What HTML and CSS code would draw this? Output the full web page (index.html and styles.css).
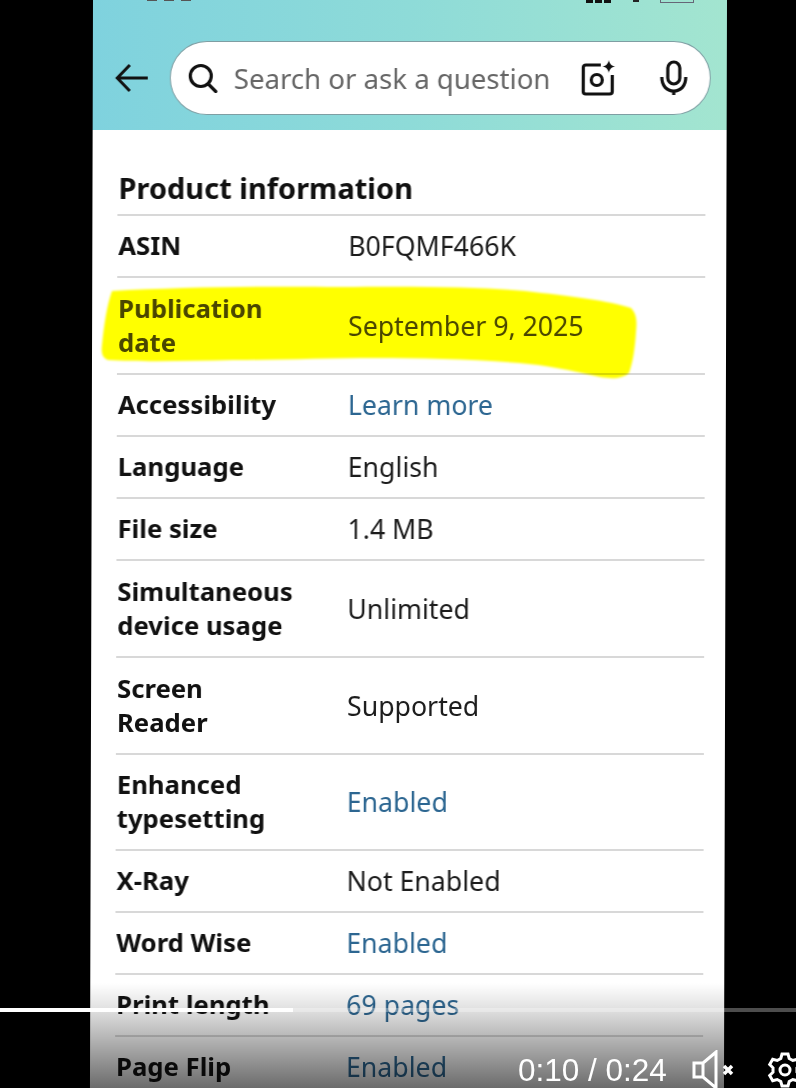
FILE: index.html
```html
<!DOCTYPE html>
<html lang="en">
<head>
  <meta charset="UTF-8">
  <meta name="viewport" content="width=device-width, initial-scale=1.0">
  <title>Product information</title>
  <link rel="stylesheet" href="styles.css">
</head>
<body>

  <div class="phone">
    <div class="top-bar">
      <div class="status-bar">
        <div class="status-time"><i></i><i></i><i></i></div>
        <div class="status-signal"><i></i><i></i><i></i></div>
        <div class="status-wifi"></div>
        <div class="status-battery"></div>
      </div>
      <div class="search-row">
        <svg class="back-icon" viewBox="0 0 34 30" width="34" height="30" fill="none" stroke="#111" stroke-width="3">
          <path d="M33 15H3M15 2 2.500 15 15 28"/>
        </svg>
        <div class="search-box">
          <svg class="search-icon" viewBox="0 0 30 30" width="30" height="30" fill="none" stroke="#111" stroke-width="3.200" stroke-linecap="round">
            <circle cx="13" cy="13" r="10.500"/>
            <path d="M20.500 21 28 28.500"/>
          </svg>
          <span class="search-text">Search or ask a question</span>
          <svg class="camera-icon" viewBox="0 0 36 36" width="36" height="36" fill="none" stroke="#111" stroke-width="3.200">
            <path d="M20 5H5a2.500 2.500 0 0 0-2.500 2.500v24A2.500 2.500 0 0 0 5 34h24a2.500 2.500 0 0 0 2.500-2.500V15"/>
            <circle cx="16" cy="20" r="5.500"/>
            <path d="M28 0c.8 4 2.500 5.700 6.500 6.500-4 .8-5.700 2.500-6.500 6.500-.8-4-2.500-5.700-6.500-6.500 4-.8 5.700-2.500 6.500-6.500Z" fill="#111" stroke="none"/>
          </svg>
          <svg class="mic-icon" viewBox="0 0 30 36" width="30" height="36" fill="none" stroke="#111" stroke-width="3.200">
            <rect x="9" y="2" width="12" height="22" rx="6"/>
            <path d="M3 17c0 9 5 14 12 14s12-5 12-14M15 31v4"/>
          </svg>
        </div>
      </div>
    </div>

    <div class="content">
      <h2>Product information</h2>

      <div class="row">
        <div class="label">ASIN</div>
        <div class="value">B0FQMF466K</div>
      </div>
      <div class="row tall marked">
        <div class="label">Publication date</div>
        <div class="value">September 9, 2025</div>
      </div>
      <div class="row">
        <div class="label">Accessibility</div>
        <div class="value link">Learn more</div>
      </div>
      <div class="row">
        <div class="label">Language</div>
        <div class="value">English</div>
      </div>
      <div class="row">
        <div class="label">File size</div>
        <div class="value">1.4 MB</div>
      </div>
      <div class="row tall">
        <div class="label">Simultaneous device usage</div>
        <div class="value">Unlimited</div>
      </div>
      <div class="row tall">
        <div class="label">Screen Reader</div>
        <div class="value">Supported</div>
      </div>
      <div class="row snug">
        <div class="label">Enhanced typesetting</div>
        <div class="value link">Enabled</div>
      </div>
      <div class="row">
        <div class="label">X-Ray</div>
        <div class="value">Not Enabled</div>
      </div>
      <div class="row">
        <div class="label">Word Wise</div>
        <div class="value link">Enabled</div>
      </div>
      <div class="row">
        <div class="label">Print length</div>
        <div class="value link">69 pages</div>
      </div>
      <div class="row">
        <div class="label">Page Flip</div>
        <div class="value link">Enabled</div>
      </div>
    </div>
  </div>

  <!-- Marker stroke drawn over the publication date row -->
  <svg class="marker" viewBox="0 0 796 1088" width="796" height="1088">
    <path d="M112 291C180 287 270 286 340 287C420 286 480 287 525 291C570 296 610 301 631 308C637 314 637 322 636 332C635 348 633 362 629 373C622 379 612 379 600 377C570 370 545 365 519 363C470 359 420 358 376 358C330 358 280 360 233 360C190 361 140 362 108 360C102 358 101 352 102 345C104 325 107 305 112 291Z"/>
  </svg>

  <!-- Video player controls -->
  <div class="player">
    <div class="progress"><div class="progress-done"></div></div>
    <div class="controls">
      <span class="time">0:10 / 0:24</span>
      <svg class="mute-icon" viewBox="0 0 42 40" width="42" height="40" fill="none" stroke="#fff" stroke-width="3">
        <path d="M2 13H11V27H2ZM11 13 24 2V38L11 27"/>
        <path d="M32 16 40 24M40 16 32 24" stroke-width="3.500"/>
      </svg>
      <svg class="gear-icon" viewBox="0 0 36 36" width="36" height="36" fill="none" stroke="#fff" stroke-width="3">
        <circle cx="18" cy="18" r="5"/>
        <path d="M15 2h6l1.200 4.500 3.600 2 4.500-1.200 3 5.200-3.300 3.300v4.400l3.300 3.300-3 5.200-4.500-1.200-3.600 2L21 34h-6l-1.200-4.500-3.600-2-4.500 1.200-3-5.200 3.300-3.300v-4.400L2.700 12.500l3-5.200 4.500 1.200 3.600-2Z"/>
      </svg>
    </div>
  </div>

</body>
</html>
```

FILE: styles.css
```css
html, body {
  height: 1088px;
}

body {
  position: relative;
  margin: 0;
  overflow: hidden;
  background-color: #000;
  font-family: 'Noto Sans', 'Open Sans', sans-serif;
  color: #111;
}

/* The filmed phone leans a little to the left */
.phone {
  width: 634px;
  margin-left: 93px;
  background-color: #fff;
  transform: skewX(-0.16deg);
  transform-origin: top left;
  filter: blur(0.3px);
}

.top-bar {
  height: 130px;
  background: linear-gradient(90deg, #7fd2de 0%, #8edbd8 50%, #a3e5d0 100%);
}

.status-bar {
  display: flex;
  align-items: flex-start;
  height: 3px;
  padding: 0 24px 0 54px;
  overflow: hidden;
}

.status-time {
  display: flex;
  gap: 7px;
  margin-right: 395px;
}

.status-time i {
  width: 10px;
  height: 1px;
  background-color: #555;
}

.status-signal {
  display: flex;
  gap: 2px;
  margin-right: 22px;
}

.status-signal i {
  width: 7px;
  height: 3px;
  background-color: #111;
}

.status-wifi {
  width: 6px;
  height: 2px;
  margin-right: 21px;
  background-color: #222;
}

.status-battery {
  width: 32px;
  height: 2px;
  border: 1px solid #667;
  border-top: none;
}

.search-row {
  display: flex;
  align-items: center;
  gap: 21px;
  padding: 38px 16px 0 22px;
}

.back-icon {
  flex: none;
}

.search-box {
  display: flex;
  align-items: center;
  flex: 1;
  height: 72px;
  padding: 0 21px 0 17px;
  background-color: #fff;
  border: 1px solid #7f9ea3;
  border-radius: 37px;
}

.search-icon {
  flex: none;
  margin-right: 16px;
}

.search-text {
  flex: 1;
  font-size: 27.6px;
  color: #666;
  white-space: nowrap;
}

.camera-icon {
  flex: none;
  margin-right: 42px;
}

.mic-icon {
  flex: none;
}

.content {
  padding: 0 21px 0 25px;
}

h2 {
  margin: 0;
  padding: 37px 0 0 1px;
  height: 47px;
  font-size: 29px;
  line-height: 42px;
  font-weight: 700;
  border-bottom: 2px solid #d8d8d8;
}

.row {
  display: flex;
  align-items: center;
  min-height: 60px;
  border-bottom: 2px solid #d8d8d8;
}

.row.tall {
  min-height: 95px;
}

.row.snug {
  min-height: 94px;
}

.label {
  flex: none;
  width: 231px;
  padding: 0 52px 0 1px;
  box-sizing: border-box;
  font-size: 25.7px;
  line-height: 34px;
  font-weight: 700;
}

.value {
  font-size: 26.7px;
  line-height: 34px;
  color: #1c1c1c;
}

.link {
  color: #2c6691;
}

.marked .label, .marked .value {
  color: #4a4612;
}

.marker {
  position: absolute;
  top: 0;
  left: 0;
  mix-blend-mode: multiply;
  pointer-events: none;
  filter: blur(1px);
}

.marker path {
  fill: #ffff00;
}

/* Player overlay fades the bottom of the video */
.player {
  position: absolute;
  left: 0;
  right: 0;
  bottom: 0;
  height: 105px;
  background: linear-gradient(180deg, rgba(0, 0, 0, 0) 0%, rgba(0, 0, 0, 0.12) 25%, rgba(0, 0, 0, 0.58) 100%);
}

.progress {
  position: absolute;
  left: 0;
  right: 0;
  top: 25px;
  height: 4px;
  background-color: rgba(255, 255, 255, 0.3);
}

.progress-done {
  width: 293px;
  height: 100%;
  background-color: #fff;
}

.controls {
  position: absolute;
  top: 67px;
  left: 518px;
  display: flex;
  align-items: center;
  width: 300px;
  height: 40px;
}

.time {
  font-family: 'Liberation Sans', sans-serif;
  font-size: 31.5px;
  color: #fff;
  white-space: nowrap;
  margin-right: 25px;
}

.mute-icon {
  flex: none;
  margin-right: 33px;
}

.gear-icon {
  flex: none;
}
```
